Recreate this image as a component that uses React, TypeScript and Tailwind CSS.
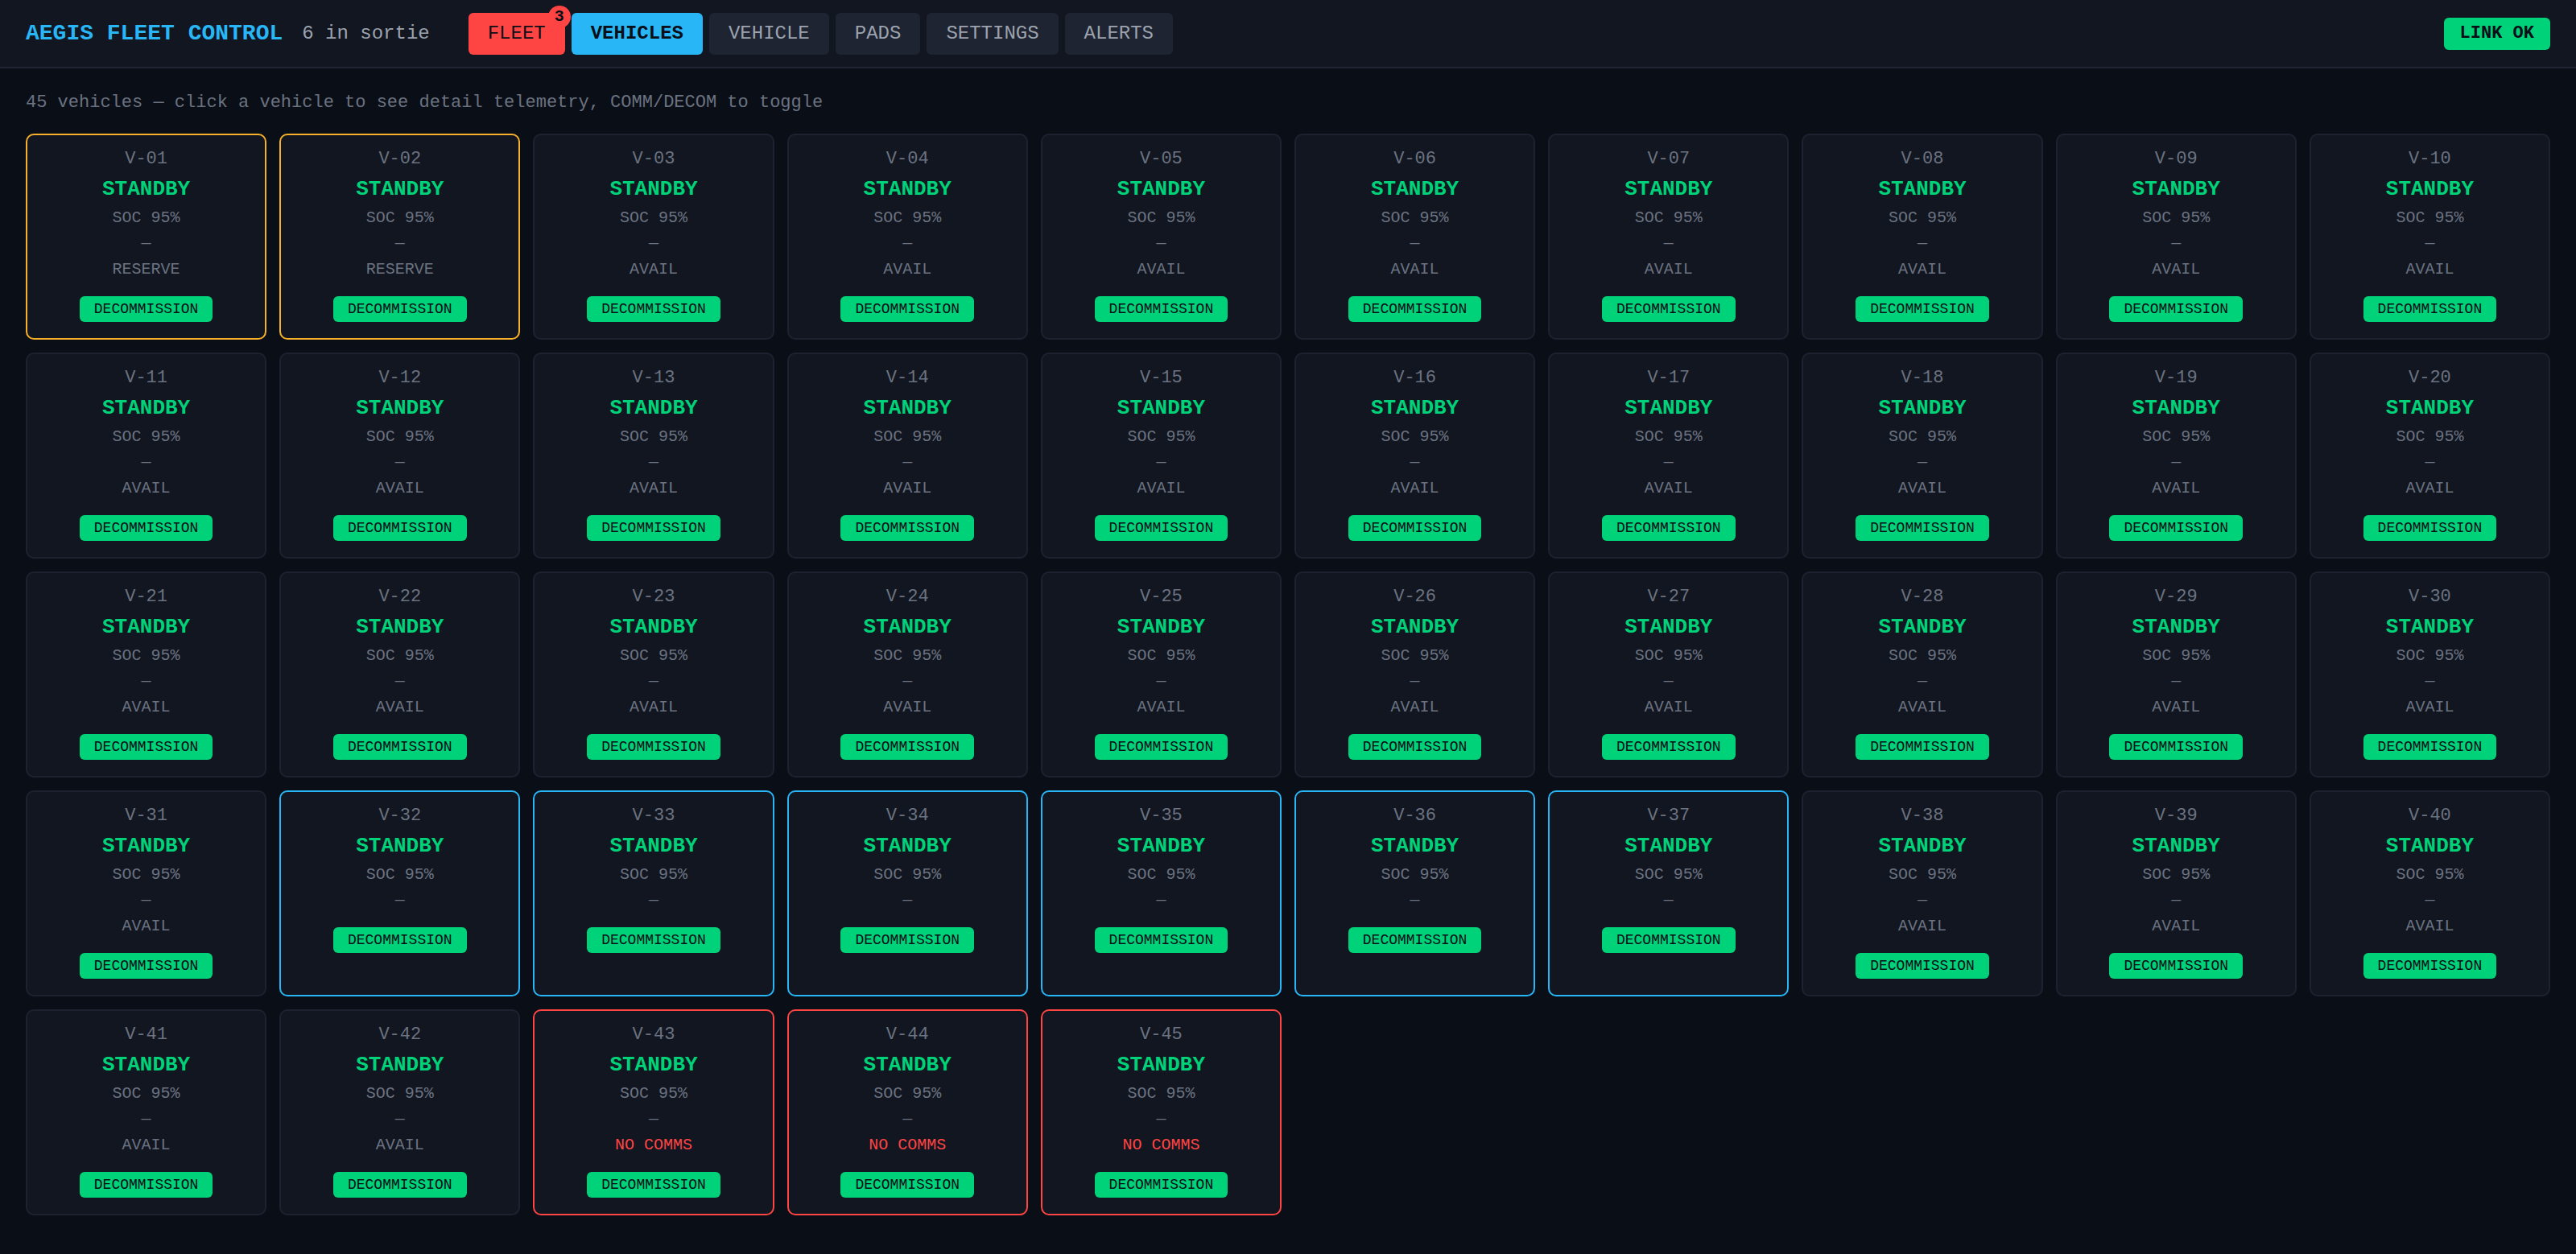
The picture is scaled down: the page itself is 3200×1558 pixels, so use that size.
type Vehicle = {
  id: string;
  tone: "default" | "reserve" | "sortie" | "nocomms";
};

const vehicles: Vehicle[] = Array.from({ length: 45 }, (_, i) => {
  const n = i + 1;
  let tone: Vehicle["tone"] = "default";
  if (n <= 2) tone = "reserve";
  else if (n >= 32 && n <= 37) tone = "sortie";
  else if (n >= 43) tone = "nocomms";
  return { id: `V-${String(n).padStart(2, "0")}`, tone };
});

const borderFor = {
  default: "border-[#1c2230]",
  reserve: "border-[#f8b02a]",
  sortie: "border-[#29b6f6]",
  nocomms: "border-[#ff4444]",
};

function VehicleCard({ v }: { v: Vehicle }) {
  return (
    <div
      className={`flex flex-col items-center rounded-[10px] border-2 bg-[#111620] pt-[14px] pb-[20px] ${borderFor[v.tone]}`}
    >
      <div className="h-[32px] leading-[32px] text-[22px] text-[#6b7280]">{v.id}</div>
      <div className="mt-[3px] h-[36px] leading-[36px] text-[26px] font-bold text-[#00d27a]">STANDBY</div>
      <div className="mt-[2px] h-[32px] leading-[32px] text-[20px] text-[#6b7280]">SOC 95%</div>
      <div className="h-[32px] leading-[32px] text-[20px] text-[#6b7280]">—</div>
      {v.tone === "reserve" && (
        <div className="h-[32px] leading-[32px] text-[20px] text-[#6b7280]">RESERVE</div>
      )}
      {v.tone === "default" && (
        <div className="h-[32px] leading-[32px] text-[20px] text-[#6b7280]">AVAIL</div>
      )}
      {v.tone === "nocomms" && (
        <div className="h-[32px] leading-[32px] text-[20px] text-[#ff4444]">NO COMMS</div>
      )}
      <button className="mt-[17px] h-[32px] rounded-[6px] bg-[#00d27a] px-[18px] text-[18px] leading-[32px] text-[#0a0e17]">
        DECOMMISSION
      </button>
    </div>
  );
}

export default function App() {
  const tabs = ["VEHICLE", "PADS", "SETTINGS", "ALERTS"];

  return (
    <div
      className="min-h-screen bg-[#0a0e17]"
      style={{ fontFamily: '"Liberation Mono", "DejaVu Sans Mono", monospace' }}
    >
      {/* Header */}
      <header className="flex h-[85px] items-center justify-between border-b-2 border-[#1f2533] bg-[#121620] px-[32px]">
        <div className="flex items-center gap-[48px]">
          <div className="flex items-center gap-[24px]">
            <span className="text-[28px] font-bold text-[#29b6f6]">AEGIS FLEET CONTROL</span>
            <span className="text-[24px] text-[#9ca3af]">6 in sortie</span>
          </div>
          <nav className="flex items-center gap-[8px]">
            <button className="relative h-[52px] rounded-[6px] bg-[#ff4444] px-[24px] text-[24px] text-[#0a0e17]">
              FLEET
              <span className="absolute -right-[7px] -top-[9px] flex h-[28px] w-[28px] items-center justify-center rounded-full bg-[#ff4444] text-[20px] font-bold text-[#0a0e17]">
                3
              </span>
            </button>
            <button className="h-[52px] rounded-[6px] bg-[#29b6f6] px-[24px] text-[24px] font-bold text-[#0a0e17]">
              VEHICLES
            </button>
            {tabs.map((t) => (
              <button
                key={t}
                className="h-[52px] rounded-[6px] bg-[#1e2431] px-[24px] text-[24px] text-[#9ca3af]"
              >
                {t}
              </button>
            ))}
          </nav>
        </div>
        <div className="flex h-[40px] items-center rounded-[6px] bg-[#00d27a] px-[20px] text-[22px] font-bold text-[#0a0e17]">
          LINK OK
        </div>
      </header>

      {/* Vehicles */}
      <main className="px-[32px] pt-[26px] pb-[40px]">
        <p className="mb-[22px] h-[33px] leading-[33px] text-[22px] text-[#6b7280]">
          45 vehicles — click a vehicle to see detail telemetry, COMM/DECOM to toggle
        </p>
        <div className="grid grid-cols-10 gap-[16px]">
          {vehicles.map((v) => (
            <VehicleCard key={v.id} v={v} />
          ))}
        </div>
      </main>
    </div>
  );
}
